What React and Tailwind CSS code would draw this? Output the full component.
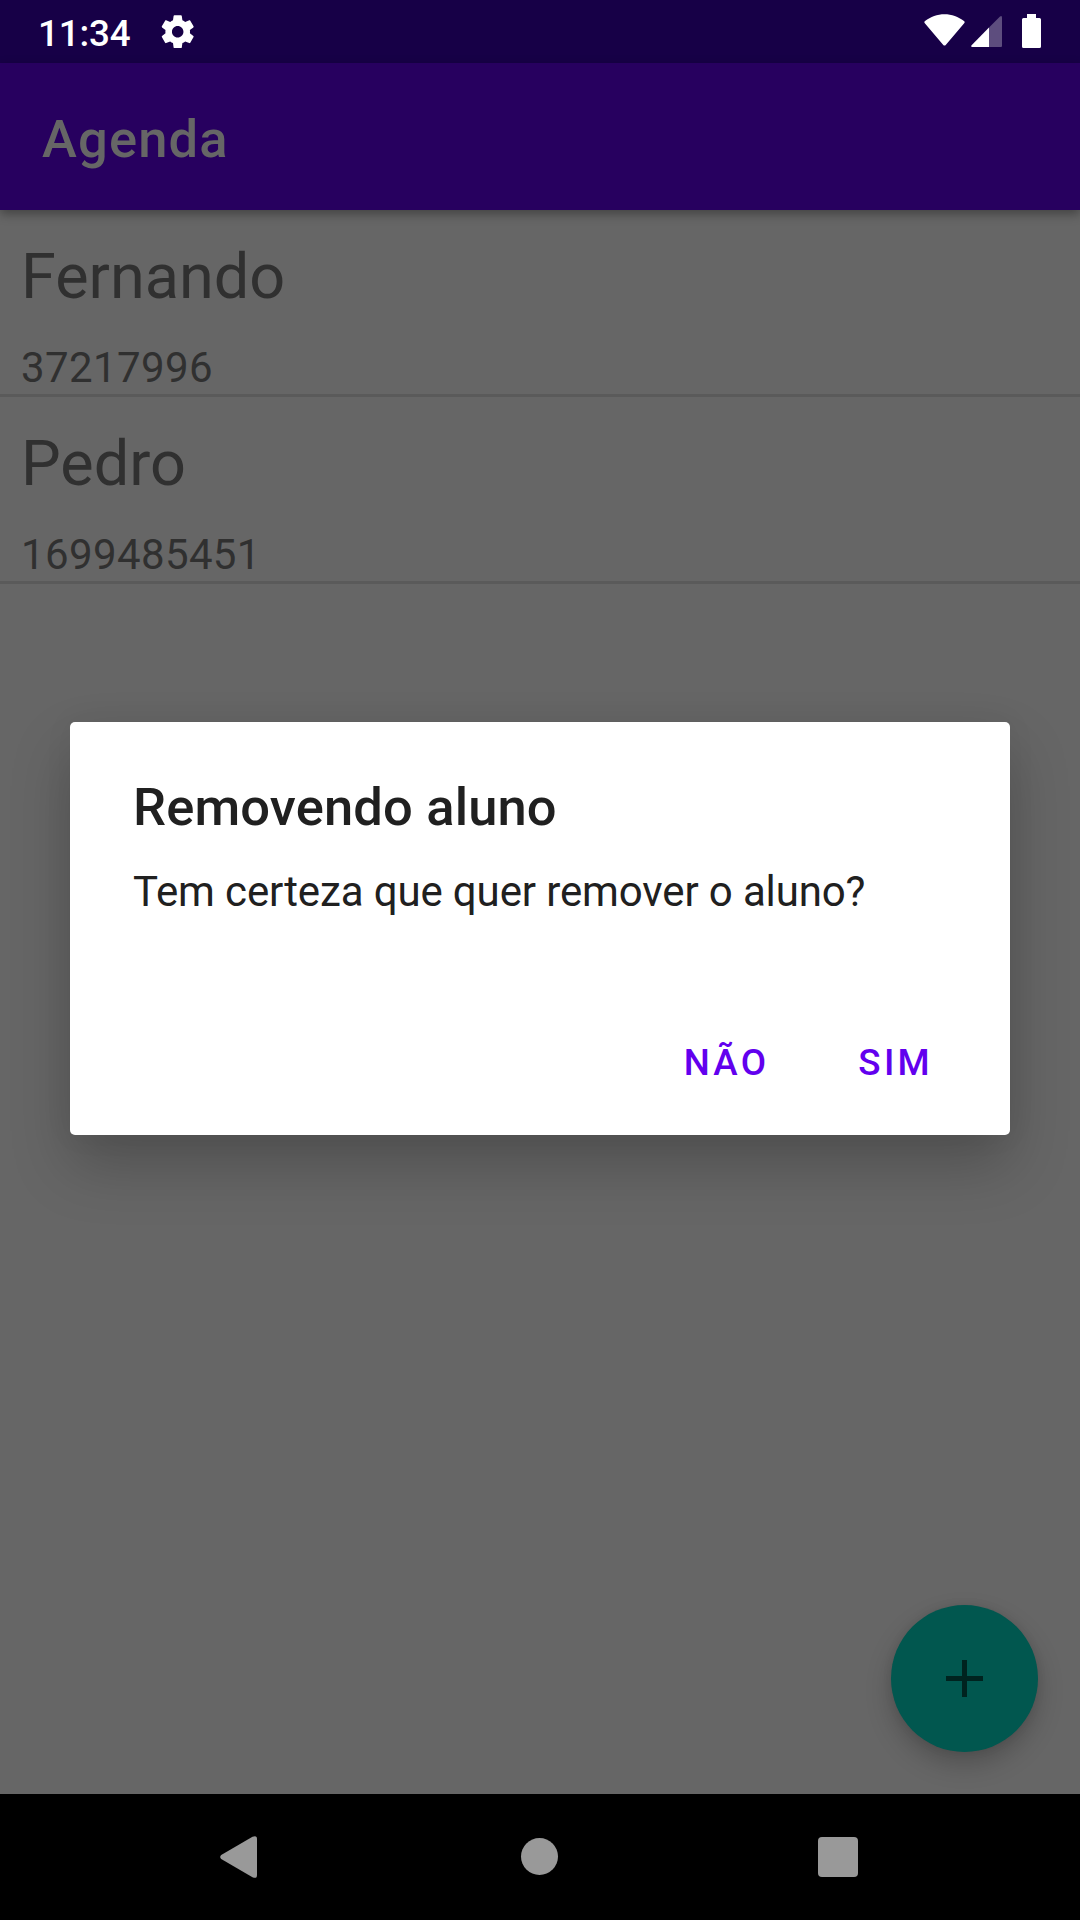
import React from "react";

const contacts = [
  { name: "Fernando", phone: "37217996" },
  { name: "Pedro", phone: "1699485451" },
];

function GearIcon() {
  return (
    <svg viewBox="0 0 24 24" className="mt-px h-[39.4px] w-[39.4px] fill-white">
      <path d="M19.43 12.98c.04-.32.07-.64.07-.98s-.03-.66-.07-.98l2.11-1.65c.19-.15.24-.42.12-.64l-2-3.46c-.12-.22-.39-.3-.61-.22l-2.49 1c-.52-.4-1.08-.73-1.69-.98l-.38-2.65C14.46 2.18 14.25 2 14 2h-4c-.25 0-.46.18-.49.42l-.38 2.65c-.61.25-1.17.59-1.69.98l-2.49-1c-.23-.09-.49 0-.61.22l-2 3.46c-.13.22-.07.49.12.64l2.11 1.65c-.04.32-.07.65-.07.98s.03.66.07.98l-2.11 1.65c-.19.15-.24.42-.12.64l2 3.46c.12.22.39.3.61.22l2.49-1c.52.4 1.08.73 1.69.98l.38 2.65c.03.24.24.42.49.42h4c.25 0 .46-.18.49-.42l.38-2.65c.61-.25 1.17-.59 1.69-.98l2.49 1c.23.09.49 0 .61-.22l2-3.46c.12-.22.07-.49-.12-.64l-2.11-1.65zM12 15.5c-1.93 0-3.5-1.57-3.5-3.5s1.57-3.5 3.5-3.5 3.5 1.57 3.5 3.5-1.57 3.5-3.5 3.5z" />
    </svg>
  );
}

function StatusBar() {
  return (
    <header className="flex h-[63px] shrink-0 items-center justify-between bg-[#170047] pl-[38px] pr-[39px] text-white">
      <div className="flex items-center">
        <span className="w-[120px] pt-[4px] text-[36.75px] font-medium leading-[43px] tracking-[-0.004em]">11:34</span>
        <GearIcon />
      </div>
      <div className="flex items-center pb-[2px]">
        <svg viewBox="0 0 40 34" className="h-[34px] w-[41px] fill-white" preserveAspectRatio="none">
          <path d="M.8 9.2Q-.2 8 1 7C6.500 2.800 13 .3 20 .3S33.500 2.800 39 7Q40.200 8 39.200 9.200L21.200 31Q20 32.200 18.800 31Z" />
        </svg>
        <svg viewBox="0 0 31 34" className="ml-[6px] h-[34px] w-[31px]">
          <path d="M.6 31.200 18 13.500V33H1.300Q-.6 32.800.6 31.200Z" fill="#fff" />
          <path d="M18 13.500 29 2.600Q31 1 31 3.600V32Q31 33 30 33H18Z" fill="#5d4d7e" />
        </svg>
        <svg viewBox="0 0 19 34" className="ml-[20px] h-[34px] w-[19px] fill-white">
          <path d="M5 0h9v4h3.500Q19 4 19 5.500V32.500Q19 34 17.500 34H1.500Q0 34 0 32.500V5.500Q0 4 1.500 4H5Z" />
        </svg>
      </div>
    </header>
  );
}

function ContactRow({ name, phone }) {
  return (
    <li className="h-[187px] border-b-[3px] border-[#5a5a5a] pl-[21px] pt-[30px] text-[#303030]">
      <p className="text-[63px] leading-[74px]">{name}</p>
      <p className="mt-[29px] text-[42px] leading-[49px] tracking-[0.009em]">{phone}</p>
    </li>
  );
}

function Dialog() {
  return (
    <div className="absolute inset-x-0 top-[722px] flex justify-center">
      <section
        role="dialog"
        className="flex h-[413px] w-[940px] flex-col rounded-[5px] bg-white pl-[63px] pr-[77px] pt-[54px] shadow-[0_30px_60px_0_rgba(0,0,0,0.22),0_0_30px_0_rgba(0,0,0,0.05)]"
      >
        <h2 className="text-[52.5px] font-medium leading-[62px] tracking-[0.0027em] text-[#202020]">Removendo aluno</h2>
        <p className="mt-[29px] text-[42px] leading-[49px] tracking-[-0.003em] text-[#202020]">Tem certeza que quer remover o aluno?</p>
        <div className="mt-[125px] flex justify-end gap-[89px] text-[36.75px] font-medium leading-[43px] tracking-[0.0893em] text-[#6200ee]">
          <button>NÃO</button>
          <button>SIM</button>
        </div>
      </section>
    </div>
  );
}

function NavBar() {
  return (
    <nav className="flex h-[126px] shrink-0 items-center justify-between bg-black pl-[220px] pr-[222px]">
      <svg viewBox="0 0 37 42" className="h-[42px] w-[37px] fill-[#999]">
        <path d="M1.200 19 32.500.8Q37-1.200 37 3V39Q37 43.200 32.500 41.200L1.200 23Q-.8 21 1.200 19Z" />
      </svg>
      <span className="mb-px ml-[4px] h-[37px] w-[37px] rounded-full bg-[#999]" />
      <span className="h-[40px] w-[40px] rounded-[4px] bg-[#999]" />
    </nav>
  );
}

export default function App() {
  return (
    <div className="relative flex h-[1920px] w-[1080px] flex-col overflow-hidden bg-[#666] font-['Roboto',sans-serif]">
      <StatusBar />
      <div className="z-10 flex h-[147px] shrink-0 items-center bg-[#27005f] pl-[42px] pt-[5px] shadow-[0_4px_10px_0_rgba(0,0,0,0.35)]">
        <h1 className="text-[52.5px] font-medium leading-[62px] tracking-[0.022em] text-[#666]">Agenda</h1>
      </div>
      <main className="relative grow">
        <ul>
          {contacts.map((c) => (
            <ContactRow key={c.name} {...c} />
          ))}
        </ul>
        <button
          aria-label="+"
          className="absolute bottom-[42px] right-[42px] flex h-[147px] w-[147px] items-center justify-center rounded-full bg-[#01574f] shadow-[0_12px_26px_0_rgba(0,0,0,0.22),0_0_10px_0_rgba(0,0,0,0.08)]"
        >
          <svg viewBox="0 0 37 37" className="h-[37px] w-[37px] fill-[#00231f]">
            <path d="M16 0h5v16h16v5H21v16h-5V21H0v-5h16Z" />
          </svg>
        </button>
      </main>
      <NavBar />
      <Dialog />
    </div>
  );
}
